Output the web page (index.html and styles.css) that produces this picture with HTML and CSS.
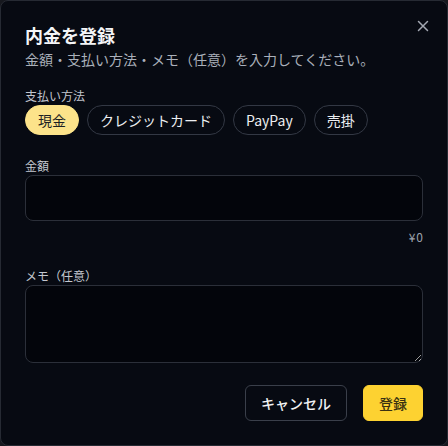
FILE: index.html
```html
<!DOCTYPE html>
<html lang="ja">
<head>
<meta charset="utf-8">
<link rel="stylesheet" href="styles.css">
</head>
<body>
<div class="dialog">
  <button class="close" aria-label="閉じる">
    <svg width="12" height="12" viewBox="0 0 12 12"><path d="M1.5 1.5 L10.5 10.5 M10.5 1.5 L1.5 10.5" stroke="currentColor" stroke-width="1.5" stroke-linecap="round"/></svg>
  </button>
  <h1 class="title">内金を登録</h1>
  <p class="subtitle">金額・支払い方法・メモ（任意）を入力してください。</p>

  <div class="field first">
    <div class="label">支払い方法</div>
    <div class="pills">
      <span class="pill active">現金</span>
      <span class="pill">クレジットカード</span>
      <span class="pill">PayPay</span>
      <span class="pill">売掛</span>
    </div>
  </div>

  <div class="field amount">
    <div class="label">金額</div>
    <input class="input" type="text">
    <div class="hint">¥0</div>
  </div>

  <div class="field memo">
    <div class="label">メモ（任意）</div>
    <textarea class="textarea"></textarea>
  </div>

  <div class="actions">
    <button class="btn cancel">キャンセル</button>
    <button class="btn primary">登録</button>
  </div>
</div>
</body>
</html>
```
FILE: styles.css
```css
* { box-sizing: border-box; }
html, body { margin: 0; padding: 0; }
body {
  background: #16181e;
  font-family: "Noto Sans CJK JP", "Noto Sans", sans-serif;
  width: 448px;
  height: 446px;
  overflow: hidden;
}
.dialog {
  position: relative;
  width: 448px;
  height: 446px;
  background: #070a12;
  border: 1px solid #262a33;
  border-radius: 8px;
  padding: 24px 24px 24px 24px;
  display: flex;
  flex-direction: column;
}
.close {
  position: absolute;
  top: 18px;
  right: 17px;
  width: 14px;
  height: 14px;
  padding: 1px;
  border: none;
  background: transparent;
  color: #a3a8b2;
  display: flex;
  align-items: center;
  justify-content: center;
}
.title {
  margin: 0;
  font-size: 18px;
  line-height: 20px;
  font-weight: 700;
  color: #f4f5f7;
}
.subtitle {
  margin: 4px 0 0;
  font-size: 14px;
  line-height: 20px;
  color: #aab0ba;
}
.field { display: flex; flex-direction: column; }
.field.first { margin-top: 19px; }
.field.amount { margin-top: 23px; }
.field.memo { margin-top: 21px; }
.label {
  font-size: 12px;
  line-height: 16px;
  color: #c3c7cf;
  margin-bottom: 1px;
}
.pills { display: flex; gap: 8px; }
.pill {
  display: inline-flex;
  align-items: center;
  height: 30px;
  padding: 0 12px;
  border: 1px solid #333844;
  border-radius: 999px;
  font-size: 14px;
  color: #eceef1;
  background: transparent;
}
.pill.active {
  background: #fce38a;
  border-color: #fce38a;
  color: #1d1f24;
}
.input {
  height: 46px;
  width: 100%;
  background: #03050b;
  border: 1px solid #2b2f39;
  border-radius: 8px;
  font: inherit;
  color: #e6e8ec;
  padding: 0 12px;
  outline: none;
}
.hint {
  text-align: right;
  font-size: 12px;
  line-height: 20px;
  margin-top: 6px;
  color: #9ea3ad;
  letter-spacing: 1px;
  margin-right: -1px;
}
.textarea {
  display: block;
  height: 78px;
  width: 100%;
  background: #03050b;
  border: 1px solid #2b2f39;
  border-radius: 8px;
  font: inherit;
  color: #e6e8ec;
  resize: vertical;
  outline: none;
}
.actions {
  margin-top: 22px;
  display: flex;
  justify-content: flex-end;
  gap: 16px;
}
.btn {
  height: 36px;
  padding: 0 15px;
  border-radius: 6px;
  font-family: inherit;
  font-size: 14px;
  font-weight: 500;
}
.cancel {
  background: transparent;
  border: 1px solid #3a3f4a;
  color: #f1f2f4;
}
.primary {
  background: #fdd231;
  border: 1px solid #fdd231;
  color: #3a3112;
}
```
